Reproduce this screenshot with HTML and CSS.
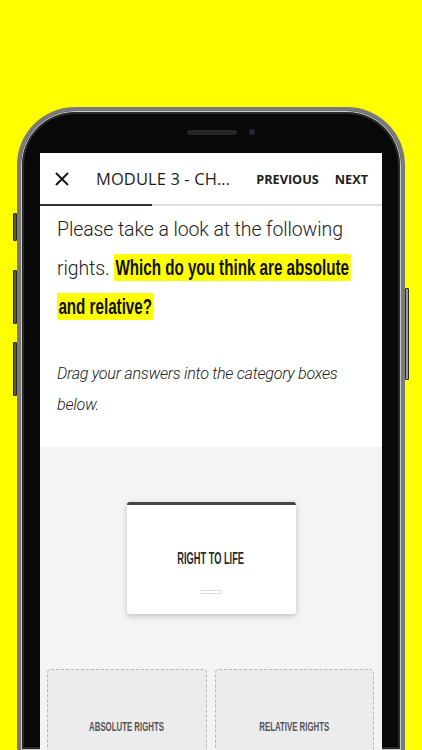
FILE: index.html
```html
<!DOCTYPE html>
<html lang="en">
<head>
  <meta charset="UTF-8" />
  <title>Module 3</title>
  <meta name="viewport" content="width=device-width, initial-scale=1.0" />
  <link rel="stylesheet" href="styles.css">
</head>
<body>

  <div class="phone">
    <span class="btn btn-mute"></span>
    <span class="btn btn-vol-up"></span>
    <span class="btn btn-vol-down"></span>
    <span class="btn btn-power"></span>

    <div class="bezel-top">
      <span class="speaker"></span>
      <span class="camera"></span>
    </div>

    <div class="screen">
      <header class="topbar">
        <svg class="close" width="14" height="14" viewBox="0 0 14 14">
          <path d="M1 1 L13 13 M13 1 L1 13" stroke="#1a1a1a" stroke-width="2" fill="none"/>
        </svg>
        <span class="title">MODULE 3 - CH...</span>
        <nav class="nav">
          <span>PREVIOUS</span>
          <span>NEXT</span>
        </nav>
      </header>
      <div class="progress"><div class="progress-fill"></div></div>

      <section class="question">
        <p class="lead">Please take a look at the following<br>rights. <span class="hl">Which do you think are absolute</span><br><span class="hl">and relative?</span></p>
        <p class="hint">Drag your answers into the category boxes<br>below.</p>
      </section>

      <section class="board">
        <div class="card">
          <div class="card-label"><span class="cond">RIGHT TO LIFE</span></div>
          <div class="grip"></div>
        </div>

        <div class="zones">
          <div class="zone"><span class="cond">ABSOLUTE RIGHTS</span></div>
          <div class="zone"><span class="cond">RELATIVE RIGHTS</span></div>
        </div>
      </section>
    </div>
  </div>

</body>
</html>
```

FILE: styles.css
```css
html, body {
  margin: 0;
  height: 750px;
  overflow: hidden;
}

body {
  background-color: #ffff00;
  font-family: "Open Sans", sans-serif;
}

.phone {
  position: relative;
  width: 388px;
  height: 643px;
  box-sizing: border-box;
  margin: 107px 0 0 17px;
  padding: 0 19px;
  border: 4px solid #7a7a7a;
  border-bottom: none;
  border-radius: 58px 58px 0 0;
  background-color: #080808;
  box-shadow: inset 0 0 0 1px #c8c8c8, inset 0 0 0 3px #2a2a2a;
}

.btn {
  position: absolute;
  width: 2px;
  background-color: #5a5a3a;
  border: 1px solid #2a2a2a;
  border-radius: 1px;
}

.btn-mute { left: -8px; top: 102px; height: 26px; }
.btn-vol-up { left: -8px; top: 159px; height: 52px; }
.btn-vol-down { left: -8px; top: 231px; height: 52px; }
.btn-power { right: -8px; top: 177px; height: 90px; background-color: #9a9a9a; }

.bezel-top {
  height: 42px;
  display: flex;
  justify-content: center;
  align-items: center;
  gap: 12px;
  padding-left: 20px;
  box-sizing: border-box;
}

.speaker {
  width: 50px;
  height: 5px;
  border-radius: 3px;
  background-color: #262626;
}

.camera {
  width: 6px;
  height: 6px;
  border-radius: 50%;
  background-color: #23233a;
}

.screen {
  background-color: #f4f4f4;
  height: 601px;
  overflow: hidden;
}

.topbar {
  height: 51px;
  display: flex;
  align-items: center;
  padding: 0 14px 0 15px;
  background-color: #fff;
}

.close {
  flex: none;
}

.title {
  margin-left: 27px;
  font-size: 16.5px;
  color: #1e1e1e;
  letter-spacing: 0.1px;
}

.nav {
  margin-left: auto;
  display: flex;
  gap: 16px;
  font-size: 12.7px;
  font-weight: 700;
  color: #1e1e1e;
}

.progress {
  height: 2px;
  background-color: #dedede;
}

.progress-fill {
  width: 112px;
  height: 100%;
  background-color: #333;
}

.question {
  background-color: #fff;
  padding: 4px 17px 27px;
  overflow: hidden;
}

.question p {
  margin: 0;
  white-space: nowrap;
}

.lead {
  font-family: "Roboto", "Liberation Sans", sans-serif;
  font-weight: 300;
  font-size: 19.5px;
  letter-spacing: -0.1px;
  line-height: 39px;
  color: #222;
}

.hl {
  display: inline-block;
  transform: scaleX(0.69);
  transform-origin: left center;
  background-color: #ffff00;
  color: #111;
  font-family: "Liberation Sans", sans-serif;
  font-weight: 700;
  font-size: 22px;
  line-height: 21px;
  letter-spacing: 0;
  padding: 3px 2px;
}

.hint {
  margin-top: 31px !important;
  font-family: "Roboto", "Liberation Sans", sans-serif;
  font-style: italic;
  font-weight: 300;
  font-size: 16.2px;
  letter-spacing: -0.3px;
  line-height: 31px;
  color: #222;
}

.board {
  padding-top: 55px;
}

.card {
  width: 169px;
  height: 112px;
  box-sizing: border-box;
  margin: 0 auto;
  background-color: #fff;
  border-top: 3px solid #444;
  border-radius: 3px;
  box-shadow: 0 2px 6px rgba(0, 0, 0, 0.22);
  display: flex;
  flex-direction: column;
  align-items: center;
}

.cond {
  display: inline-block;
  font-family: "Liberation Sans", sans-serif;
  font-weight: 700;
}

.card-label {
  margin-top: 42px;
  text-align: center;
}

.card-label .cond {
  font-size: 16px;
  color: #2a2a2a;
  transform: scaleX(0.58);
}

.grip {
  margin-top: 21px;
  width: 21px;
  height: 2px;
  border-top: 1px solid #ddd;
  border-bottom: 1px solid #ddd;
}

.zones {
  margin-top: 55px;
  padding: 0 8px 0 7px;
  display: grid;
  grid-template-columns: 1fr 1fr;
  gap: 8px;
}

.zone {
  height: 116px;
  box-sizing: border-box;
  padding-top: 44px;
  text-align: center;
  background-color: #ececec;
  border: 1px dashed #b8b8b8;
  border-radius: 4px;
}

.zone .cond {
  font-size: 13.5px;
  color: #555;
  transform: scaleX(0.58);
}
```
